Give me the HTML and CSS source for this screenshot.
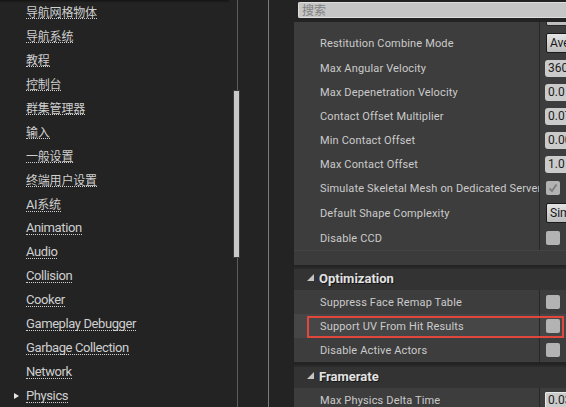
FILE: index.html
```html
<!DOCTYPE html>
<html lang="zh-CN">
<head>
<meta charset="utf-8">
<title>Project Settings</title>
<link rel="stylesheet" href="styles.css">
</head>
<body>
<div class="sidebar">
  <div class="topshade"></div>
  <ul class="nav">
    <li><span class="arrow"></span><span class="link zh">导航网格物体</span></li>
    <li><span class="arrow"></span><span class="link zh">导航系统</span></li>
    <li><span class="arrow"></span><span class="link zh">教程</span></li>
    <li><span class="arrow"></span><span class="link zh">控制台</span></li>
    <li><span class="arrow"></span><span class="link zh">群集管理器</span></li>
    <li><span class="arrow"></span><span class="link zh">输入</span></li>
    <li><span class="arrow"></span><span class="link zh">一般设置</span></li>
    <li><span class="arrow"></span><span class="link zh">终端用户设置</span></li>
    <li><span class="arrow"></span><span class="link">AI<span class="zh">系统</span></span></li>
    <li><span class="arrow"></span><span class="link">Animation</span></li>
    <li><span class="arrow"></span><span class="link">Audio</span></li>
    <li><span class="arrow"></span><span class="link">Collision</span></li>
    <li><span class="arrow"></span><span class="link">Cooker</span></li>
    <li><span class="arrow"></span><span class="link">Gameplay Debugger</span></li>
    <li><span class="arrow"></span><span class="link">Garbage Collection</span></li>
    <li><span class="arrow"></span><span class="link">Network</span></li>
    <li><span class="arrow"><svg width="5" height="6" viewBox="0 0 5 6"><polygon points="0,0 5,3 0,6" fill="#e6e6e6"/></svg></span><span class="link">Physics</span></li>
  </ul>
</div>
<div class="scrolltrack"><div class="thumb"></div></div>
<div class="gap"></div>
<div class="splitter"></div>
<div class="main">
  <div class="search">搜索</div>
  <div class="panel">
    <div class="category">
      <div class="row partial"><div class="label"></div><div class="value"><div class="combo cut"></div></div></div>
      <div class="row tall"><div class="label">Restitution Combine Mode</div><div class="value"><div class="combo">Average</div></div></div>
      <div class="row"><div class="label">Max Angular Velocity</div><div class="value"><div class="num">3600.0</div></div></div>
      <div class="row"><div class="label">Max Depenetration Velocity</div><div class="value"><div class="num">0.0</div></div></div>
      <div class="row"><div class="label">Contact Offset Multiplier</div><div class="value"><div class="num">0.07</div></div></div>
      <div class="row"><div class="label">Min Contact Offset</div><div class="value"><div class="num">0.0001</div></div></div>
      <div class="row"><div class="label">Max Contact Offset</div><div class="value"><div class="num">1.0</div></div></div>
      <div class="row"><div class="label">Simulate Skeletal Mesh on Dedicated Server</div><div class="value"><div class="check on"><svg width="14" height="14" viewBox="0 0 14 14"><polyline points="3.5,7.5 6,10 10.5,3.5" fill="none" stroke="#7e7e7e" stroke-width="2"/></svg></div></div></div>
      <div class="row tall"><div class="label">Default Shape Complexity</div><div class="value"><div class="combo">Simple And Complex</div></div></div>
      <div class="row"><div class="label">Disable CCD</div><div class="value"><div class="check"></div></div></div>
      <div class="advanced"></div>
    </div>
    <div class="category">
      <div class="header"><svg class="tri" width="7" height="7" viewBox="0 0 7 7"><polygon points="7,0 7,7 0,7" fill="#c4c4c4"/></svg>Optimization</div>
      <div class="row"><div class="label">Suppress Face Remap Table</div><div class="value"><div class="check"></div></div></div>
      <div class="row hover marked"><div class="label">Support UV From Hit Results</div><div class="value"><div class="check"></div></div></div>
      <div class="row"><div class="label">Disable Active Actors</div><div class="value"><div class="check"></div></div></div>
    </div>
    <div class="category">
      <div class="header"><svg class="tri" width="7" height="7" viewBox="0 0 7 7"><polygon points="7,0 7,7 0,7" fill="#c4c4c4"/></svg>Framerate</div>
      <div class="row"><div class="label">Max Physics Delta Time</div><div class="value"><div class="num sq">0.033333</div></div></div>
    </div>
  </div>
</div>
</body>
</html>
```

FILE: styles.css
```css
* { box-sizing: border-box; }
html, body { margin: 0; padding: 0; }
body {
  width: 566px;
  height: 407px;
  overflow: hidden;
  background: #232323;
  display: flex;
  font-family: Roboto, "Noto Sans CJK SC", sans-serif;
}
.sidebar {
  width: 233px;
  position: relative;
  flex: none;
}
.topshade {
  position: absolute;
  left: 0; top: 0;
  width: 229px; height: 3px;
  background: linear-gradient(#141414, rgba(20,20,20,0));
}
.nav {
  list-style: none;
  margin: 0;
  padding: 0;
}
.nav li {
  height: 24px;
  display: flex;
  align-items: center;
  padding-left: 14px;
}
.arrow {
  width: 12px;
  display: flex;
  align-items: center;
}
.link {
  display: inline-block;
  font-size: 13px;
  letter-spacing: -0.4px;
  line-height: 13px;
  color: #cfcfcf;
  border-bottom: 1px dotted #d0d0d0;
  white-space: nowrap;
}
.zh {
  font-family: "Noto Sans CJK SC", sans-serif;
  font-size: 12px;
  letter-spacing: -0.2px;
}
.scrolltrack {
  width: 8px;
  flex: none;
  background: linear-gradient(90deg, transparent 4px, #5c5c5c 4px, #5c5c5c 5px, transparent 5px);
}
.thumb {
  margin-top: 90px;
  height: 168px;
  width: 7px;
  background: #c9c9c9;
  border: 1px solid #3a3a3a;
  border-radius: 1px;
}
.gap { width: 27px; flex: none; }
.splitter { width: 1px; flex: none; background: #7a7a7a; }
.main {
  flex: 1;
  min-width: 0;
  padding-left: 25px;
  display: flex;
  flex-direction: column;
}
.search {
  margin: 2px 0 0 4px;
  height: 16px;
  background: #c6c6c6;
  border: 1px solid #dedede;
  border-right: none;
  border-radius: 2px 0 0 2px;
  font-family: "Noto Sans CJK SC", sans-serif;
  font-size: 12px;
  line-height: 14px;
  color: #818181;
  padding-left: 3px;
}
.panel {
  margin-top: 4px;
  display: flex;
  flex-direction: column;
  gap: 2px;
}
.category {
  background: #3d3d3d;
}
.category + .category + .category { margin-top: 1px; }
.header {
  height: 23px;
  background: #333333;
  border-top: 2px solid #2a2a2a;
  display: flex;
  align-items: center;
  padding-left: 13px;
  padding-bottom: 2px;
  font-size: 13px;
  font-weight: 700;
  color: #e2e2e2;
  text-shadow: 1px 1px 0 #151515;
}
.tri { margin-right: 5px; margin-top: -2px; }
.row {
  height: 24px;
  display: flex;
  position: relative;
}
.row.tall { height: 26px; }
.row.partial { height: 8px; }
.row.hover { background: #464646; }
.marked::after {
  content: "";
  position: absolute;
  left: 13px; top: 2px; right: 2px; bottom: 0;
  border: 2px solid #e2473e;
}
.label {
  width: 245px;
  flex: none;
  padding-left: 26px;
  display: flex;
  align-items: center;
  overflow: hidden;
  white-space: nowrap;
  font-size: 11px;
  letter-spacing: 0.15px;
  color: #cbcbcb;
}
.value {
  flex: 1;
  border-left: 1px solid #272727;
  padding-left: 5px;
  display: flex;
  align-items: center;
  overflow: hidden;
  white-space: nowrap;
}
.partial .value { align-items: flex-end; }
.combo {
  flex: none;
  width: 120px;
  height: 20px;
  margin-left: 1px;
  border: 1px solid #1b1b1b;
  border-radius: 2px;
  background: linear-gradient(#e4e4e4, #bcbcbc);
  font-size: 12px;
  line-height: 18px;
  color: #151515;
  padding-left: 3px;
}
.combo.cut { margin-bottom: 4px; border-color: #2a2a2a; }
.num {
  flex: none;
  width: 80px;
  height: 17px;
  background: #cbcbcb;
  border-radius: 3px;
  font-size: 12px;
  line-height: 17px;
  color: #202020;
  padding-left: 3px;
}
.num.sq { border-radius: 1px; border: 1px solid #e8e8e8; line-height: 15px; padding-left: 2px; }
.check {
  flex: none;
  width: 14px;
  height: 14px;
  margin-left: 1px;
  background: #b3b3b3;
  border-radius: 2px;
}
.check svg { display: block; }
.advanced {
  height: 15px;
  background: #3b3b3b;
  border-top: 1px solid #444444;
}
```
